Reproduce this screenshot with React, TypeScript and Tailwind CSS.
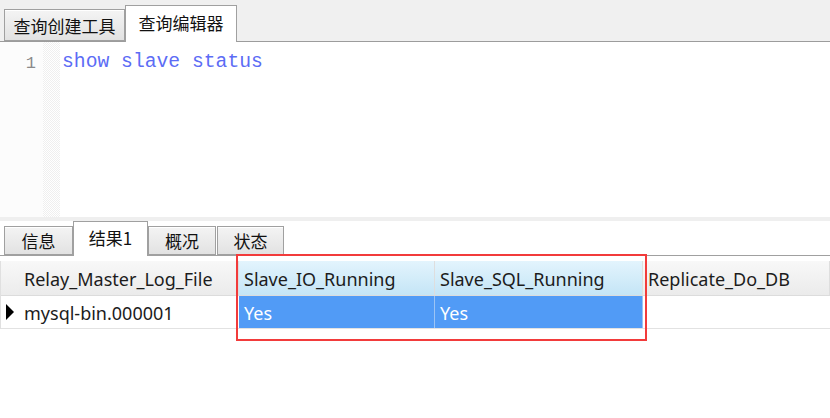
import React from "react";

const cjk = "font-['Noto_Sans_CJK_SC','Noto_Sans',sans-serif]";
const ui = "font-['Noto_Sans','Noto_Sans_CJK_SC',sans-serif]";

const Tab = ({ label, active, className }: any) => (
  <div
    className={`${cjk} ${className} flex items-center justify-center border border-[#a0a0a0] text-[17px] leading-none text-[#111] ${
      active
        ? "bg-white border-b-0 relative z-10 -mb-px pb-[3px]"
        : "bg-gradient-to-b from-[#f4f4f4] to-[#e2e2e2] shadow-[inset_0_1px_0_#fff]"
    }`}
  >
    {label}
  </div>
);

export default function App() {
  const cols = [
    { name: "Relay_Master_Log_File", w: "w-[220px]", value: "mysql-bin.000001", sel: false },
    { name: "Slave_IO_Running", w: "w-[196px]", value: "Yes", sel: true },
    { name: "Slave_SQL_Running", w: "w-[208px]", value: "Yes", sel: true },
    { name: "Replicate_Do_DB", w: "flex-1", value: "", sel: false },
  ];

  return (
    <div className="relative w-[830px] h-[418px] overflow-hidden bg-white">
      {/* query tabs */}
      <div className="flex h-[42px] items-end border-b border-[#9c9c9c] bg-[#f0f0f0] pl-1">
        <Tab label="查询创建工具" className="h-[32px] w-[121px]" />
        <Tab label="查询编辑器" active className="h-[37px] w-[112px]" />
      </div>

      {/* editor */}
      <div className="flex h-[175px]">
        <div className="w-[43px] bg-[#fcfcfc] pt-[9px] pr-[7px] text-right font-['Liberation_Mono',monospace] text-[17px] text-[#8a8a8a]">
          1
        </div>
        <div className="w-[17px] bg-[repeating-conic-gradient(#efefef_0_25%,#fff_0_50%)] bg-[length:2px_2px]" />
        <div className="pl-[2px] pt-[8px] font-['Liberation_Mono',monospace] text-[19.7px] leading-[24px] text-[#5c6cf5]">
          show slave status
        </div>
      </div>

      <div className="h-[4px] bg-[#efefef]" />

      {/* result tabs */}
      <div className="flex h-[35px] items-end border-b border-[#a0a0a0] pl-1">
        <Tab label="信息" className="h-[29px] w-[69px]" />
        <Tab label="结果1" active className="h-[35px] w-[75px]" />
        <Tab label="概况" className="h-[29px] w-[68px]" />
        <Tab label="状态" className="ml-[1px] h-[29px] w-[67px]" />
      </div>

      {/* grid */}
      <div className={`${ui} mt-[5px] border-l border-[#e0e0e0] text-[18px] text-[#1c1c1c]`}>
        <div className="flex h-[35px] border-b border-[#dcdcdc]">
          <div className="w-[18px] bg-gradient-to-b from-[#f8f8f8] to-[#ececec]" />
          {cols.map((c) => (
            <div
              key={c.name}
              className={`${c.w} flex items-center border-r border-[#dedede] pl-[5px] pt-[3px] ${
                c.sel
                  ? "bg-gradient-to-b from-[#e3f4fd] to-[#c4e5f6]"
                  : "bg-gradient-to-b from-[#f8f8f8] to-[#ebebeb]"
              }`}
            >
              {c.name}
            </div>
          ))}
        </div>
        <div className="flex h-[33px] border-b border-[#e2e2e2]">
          <div className="flex w-[18px] items-center justify-center">
            <svg width="10" height="16" viewBox="0 0 10 16">
              <path d="M1 0 L9 8 L1 16 Z" fill="#000" />
            </svg>
          </div>
          {cols.map((c) => (
            <div
              key={c.name}
              className={`${c.w} flex items-center pl-[5px] pt-[2px] ${
                c.sel ? "border-r border-[#9cc4f5] bg-[#519bf6] text-white" : ""
              }`}
            >
              {c.value}
            </div>
          ))}
        </div>
      </div>

      {/* annotation */}
      <div className="absolute left-[236px] top-[254px] h-[87px] w-[411px] border-2 border-[#f23b3b]" />
    </div>
  );
}
